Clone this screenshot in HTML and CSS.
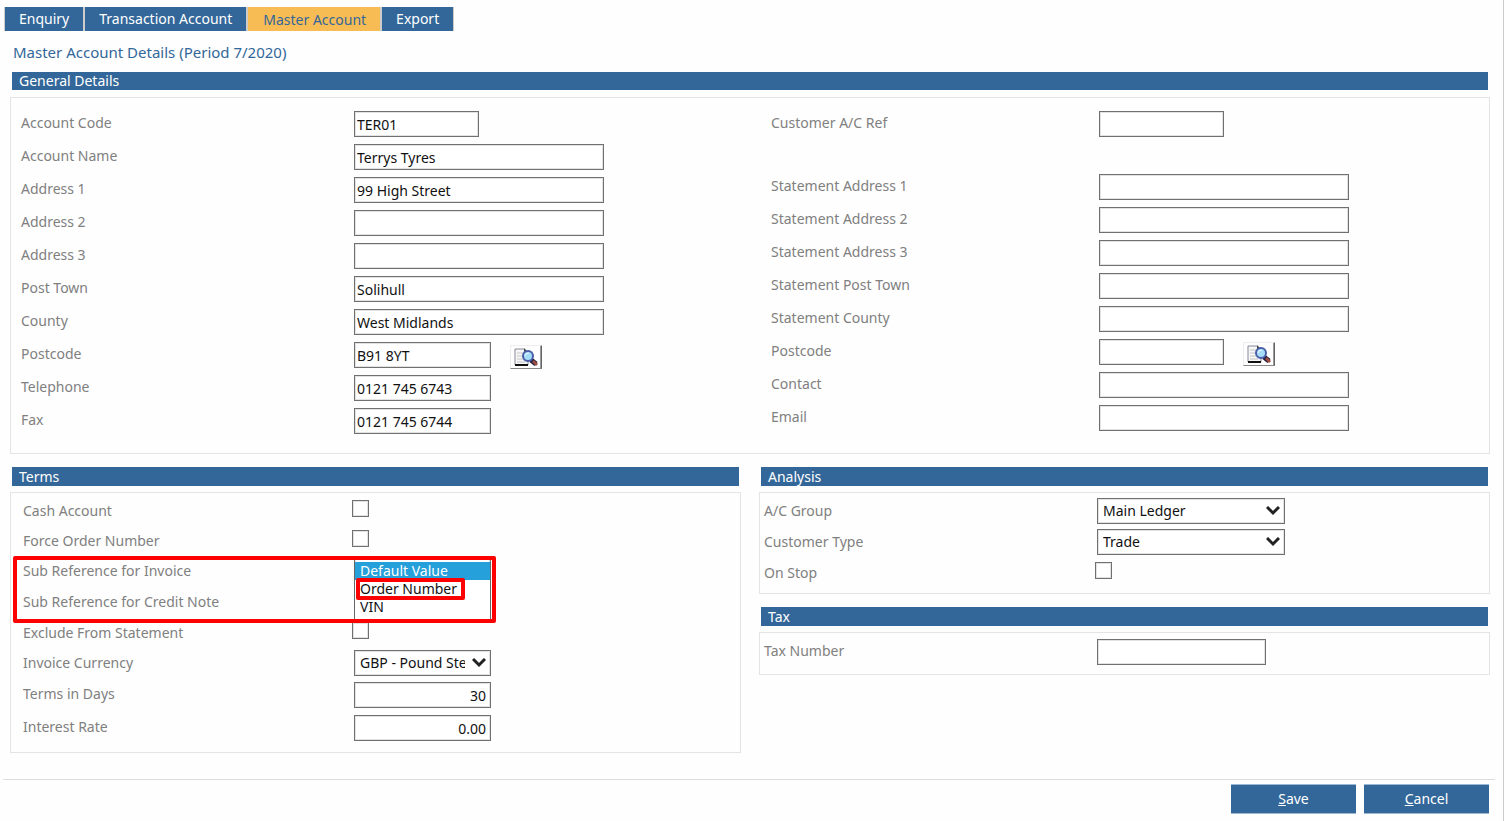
FILE: index.html
```html
<!DOCTYPE html>
<html lang="en">
<head>
  <meta charset="UTF-8">
  <title>Master Account Details</title>
  <meta name="viewport" content="width=device-width, initial-scale=1">
  <link rel="stylesheet" href="styles.css">
</head>

<body>

  <!-- Shared icon -->
  <svg class="sprite" aria-hidden="true">
    <symbol id="lookup" viewBox="0 0 24 18">
      <path d="M1 1h9l4 4v12H1z" fill="#f7f7f7" stroke="#889" />
      <path d="M1 17h13" stroke="#111" stroke-width="2" />
      <path d="M10 0l4 4h-4z" fill="#444" />
      <path d="M3 5h6M3 8h6M3 11h6M3 14h8" stroke="#c4c4c4" />
      <path d="M17 12l5 4" stroke="#22203c" stroke-width="5" />
      <path d="M19 13l4 4" stroke="#9c4b42" stroke-width="3" />
      <circle cx="14" cy="8" r="5" fill="#a5dcf8" stroke="#4a5da8" stroke-width="2" />
      <path d="M11 8q0-3 4-3" stroke="#effaff" stroke-width="1" fill="none" />
    </symbol>
  </svg>

  <!-- Tabs -->
  <nav class="tabs">
    <a href="#enquiry">Enquiry</a>
    <a href="#transaction">Transaction Account</a>
    <a href="#master" class="active" aria-current="page">Master Account</a>
    <a href="#export">Export</a>
  </nav>

  <form class="page">
    <h1>Master Account Details (Period 7/2020)</h1>

    <!-- General details -->
    <section class="details">
      <h2>General Details</h2>
      <div class="panel general">
        <div class="fields">
          <div class="row"><label for="code">Account Code</label><input type="text" id="code" class="short" value="TER01"></div>
          <div class="row"><label for="name">Account Name</label><input type="text" id="name" value="Terrys Tyres"></div>
          <div class="row"><label for="addr1">Address 1</label><input type="text" id="addr1" value="99 High Street"></div>
          <div class="row"><label for="addr2">Address 2</label><input type="text" id="addr2"></div>
          <div class="row"><label for="addr3">Address 3</label><input type="text" id="addr3"></div>
          <div class="row"><label for="town">Post Town</label><input type="text" id="town" value="Solihull"></div>
          <div class="row"><label for="county">County</label><input type="text" id="county" value="West Midlands"></div>
          <div class="row">
            <label for="postcode">Postcode</label><input type="text" id="postcode" class="medium" value="B91 8YT">
            <button type="button" class="lookup" aria-label="Find address"><svg><use href="#lookup" /></svg></button>
          </div>
          <div class="row"><label for="phone">Telephone</label><input type="text" id="phone" class="medium" value="0121 745 6743"></div>
          <div class="row"><label for="fax">Fax</label><input type="text" id="fax" class="medium" value="0121 745 6744"></div>
        </div>

        <div class="fields statement">
          <div class="row first"><label for="custref">Customer A/C Ref</label><input type="text" id="custref" class="short"></div>
          <div class="row"><label for="st1">Statement Address 1</label><input type="text" id="st1"></div>
          <div class="row"><label for="st2">Statement Address 2</label><input type="text" id="st2"></div>
          <div class="row"><label for="st3">Statement Address 3</label><input type="text" id="st3"></div>
          <div class="row"><label for="sttown">Statement Post Town</label><input type="text" id="sttown"></div>
          <div class="row"><label for="stcounty">Statement County</label><input type="text" id="stcounty"></div>
          <div class="row">
            <label for="stpostcode">Postcode</label><input type="text" id="stpostcode" class="short">
            <button type="button" class="lookup" aria-label="Find statement address"><svg><use href="#lookup" /></svg></button>
          </div>
          <div class="row"><label for="contact">Contact</label><input type="text" id="contact"></div>
          <div class="row"><label for="email">Email</label><input type="text" id="email"></div>
        </div>
      </div>
    </section>

    <div class="columns">
      <!-- Terms -->
      <section>
        <h2>Terms</h2>
        <div class="panel terms">
          <div class="row"><label for="cash">Cash Account</label><input type="checkbox" id="cash"></div>
          <div class="row"><label for="force">Force Order Number</label><input type="checkbox" id="force"></div>
          <div class="marked">
            <div class="row">
              <label for="subinv">Sub Reference for Invoice</label>
              <div class="dropdown">
                <select id="subinv" class="medium"><option>Default Value</option><option>Order Number</option><option>VIN</option></select>
                <ul class="menu" role="listbox" aria-label="Sub Reference for Invoice">
                  <li role="option" aria-selected="true">Default Value</li>
                  <li role="option" class="callout">Order Number</li>
                  <li role="option">VIN</li>
                </ul>
              </div>
            </div>
            <div class="row loose">
              <label for="subcred">Sub Reference for Credit Note</label>
              <select id="subcred" class="medium"><option>Default Value</option><option>Order Number</option><option>VIN</option></select>
            </div>
          </div>
          <div class="row loose"><label for="exclude">Exclude From Statement</label><input type="checkbox" id="exclude"></div>
          <div class="row"><label for="currency">Invoice Currency</label><select id="currency" class="medium"><option>GBP - Pound Sterling</option></select></div>
          <div class="row tall"><label for="days">Terms in Days</label><input type="text" id="days" class="medium number" value="30"></div>
          <div class="row tall"><label for="rate">Interest Rate</label><input type="text" id="rate" class="medium number" value="0.00"></div>
        </div>
      </section>

      <div class="stack">
        <!-- Analysis -->
        <section>
          <h2>Analysis</h2>
          <div class="panel analysis">
            <div class="row"><label for="group">A/C Group</label><select id="group"><option>Main Ledger</option></select></div>
            <div class="row"><label for="type">Customer Type</label><select id="type"><option>Trade</option></select></div>
            <div class="row"><label for="stop">On Stop</label><input type="checkbox" id="stop"></div>
          </div>
        </section>

        <!-- Tax -->
        <section>
          <h2>Tax</h2>
          <div class="panel tax">
            <div class="row"><label for="taxno">Tax Number</label><input type="text" id="taxno"></div>
          </div>
        </section>
      </div>
    </div>

    <!-- Actions -->
    <footer>
      <button type="submit" accesskey="s"><u>S</u>ave</button>
      <button type="button" accesskey="c"><u>C</u>ancel</button>
    </footer>
  </form>

</body>
</html>
```
FILE: styles.css
```css
*, *::after { box-sizing: border-box; }
body {
  margin: 0;
  min-height: 100vh;
  padding-top: 7px;
  border-right: 1px solid #ccc;
  background-color: #fefefe;
  font-family: Tahoma, "Noto Sans", sans-serif;
  font-size: 14px;
  line-height: 18px;
  color: #111;
}
.sprite {
  position: absolute;
  width: 0;
  height: 0;
}
.tabs {
  display: flex;
  width: max-content;
  margin-left: 4px;
  padding: 0 1px;
  gap: 2px;
  background-color: #ccc;
}
.tabs a {
  padding: 3px 14px;
  background-color: #336799;
  color: white;
  text-decoration: none;
}
.tabs .active {
  padding: 4px 14px 2px 15px;
  background-color: #f8bc55;
  color: #336799;
}
h1 {
  margin: 12px 13px 11px;
  font-size: 15px;
  font-weight: normal;
  line-height: 18px;
  color: #336799;
}
h2 {
  margin: 0 2px 6px;
  padding-left: 7px;
  background-color: #336799;
  font-size: 14px;
  font-weight: normal;
  line-height: 19px;
  color: white;
}
.panel {
  border: 1px solid #e4e4e4;
}
.details { margin: 0 13px 0 10px; }
.details h2 {
  margin-bottom: 7px;
  line-height: 18px;
}
.general {
  display: grid;
  grid-template-columns: 1fr 1fr;
  padding: 9px 0 16px;
}
.fields { padding-left: 10px; }
.statement { padding-left: 21px; }
.row {
  display: flex;
  align-items: center;
  height: 33px;
}
.row.first { margin-bottom: 30px; }
label {
  flex: none;
  width: 333px;
  padding-bottom: 2px;
  color: #808080;
}
.statement label { width: 328px; }

input,
select {
  width: 250px;
  height: 26px;
  margin: 0;
  border: 1px solid #707070;
  border-radius: 0;
  background-color: white;
  box-shadow: inset 0 0 0 1px #e2e2e2;
  font: inherit;
  color: #111;
}
input { padding: 1px 3px 0 2px; }
select {
  appearance: none;
  padding: 0 25px 0 5px;
  background-image: url("data:image/svg+xml,%3Csvg xmlns='http://www.w3.org/2000/svg' width='14' height='10'%3E%3Cpath d='M1 1l6 6 6-6' fill='none' stroke='%23222' stroke-width='3'/%3E%3C/svg%3E");
  background-repeat: no-repeat;
  background-position: right 4px center;
}
input[type="checkbox"] {
  appearance: none;
  width: 17px;
  height: 17px;
  margin: 0 0 5px -2px;
  padding: 0;
}
input.short { width: 125px; }
.medium { width: 137px; }
input.number {
  padding-right: 4px;
  text-align: right;
}
.lookup {
  display: flex;
  align-items: center;
  justify-content: center;
  width: 32px;
  height: 24px;
  margin: 4px 0 0 19px;
  padding: 0;
  border: 1px solid;
  border-color: #eee #666 #888 #eee;
  box-shadow: inset -1px 0 #999;
  background-color: #fefefe;
}
.lookup svg {
  width: 24px;
  height: 18px;
}

/* Lower panels */
.columns {
  display: grid;
  grid-template-columns: 1fr 1fr;
  align-items: start;
  gap: 18px;
  margin: 13px 13px 0 10px;
}
.stack {
  display: grid;
  gap: 13px;
}
.terms {
  padding: 3px 0 8px 12px;
}
.terms .row { height: 30px; }
.terms .loose { height: 31px; }
.terms .tall { height: 33px; }
.terms label {
  width: 331px;
  padding-bottom: 0;
}
.terms .tall label { padding-bottom: 2px; }
.marked { position: relative; }
.marked::after {
  content: "";
  position: absolute;
  top: 0;
  left: -10px;
  width: 483px;
  height: 67px;
  border: 4px solid #fe0000;
  border-radius: 2px;
  pointer-events: none;
}
.dropdown {
  position: relative;
  height: 26px;
}
.menu {
  position: absolute;
  z-index: 1;
  top: 4px;
  left: 0;
  width: 137px;
  margin: 0;
  padding: 0 0 3px;
  border: solid #666;
  border-width: 0 1px;
  background-color: white;
  list-style: none;
}
.menu li {
  position: relative;
  padding-left: 5px;
}
.menu [aria-selected="true"] {
  background-color: #26a0da;
  color: white;
}
.callout::after {
  content: "";
  position: absolute;
  inset: -2px 25px -2px 1px;
  border: 4px solid #fe0000;
  border-radius: 2px;
}
.analysis {
  padding: 2px 0 5px 4px;
}
.analysis .row { height: 31px; }
.analysis label,
.tax label {
  width: 333px;
  padding-bottom: 0;
}
.analysis select { width: 188px; }
.tax { padding: 2px 0 6px 4px; }
.tax label { padding-bottom: 2px; }
.tax input { width: 169px; }

footer {
  display: flex;
  justify-content: flex-end;
  gap: 8px;
  margin: 26px 8px 0 3px;
  padding: 4px 6px 7px;
  border-top: 1px solid #ddd;
}
footer button {
  width: 125px;
  height: 30px;
  padding: 0;
  border: solid #9db8d2;
  border-width: 1px 0;
  background-color: #336799;
  font: inherit;
  color: white;
}
```
